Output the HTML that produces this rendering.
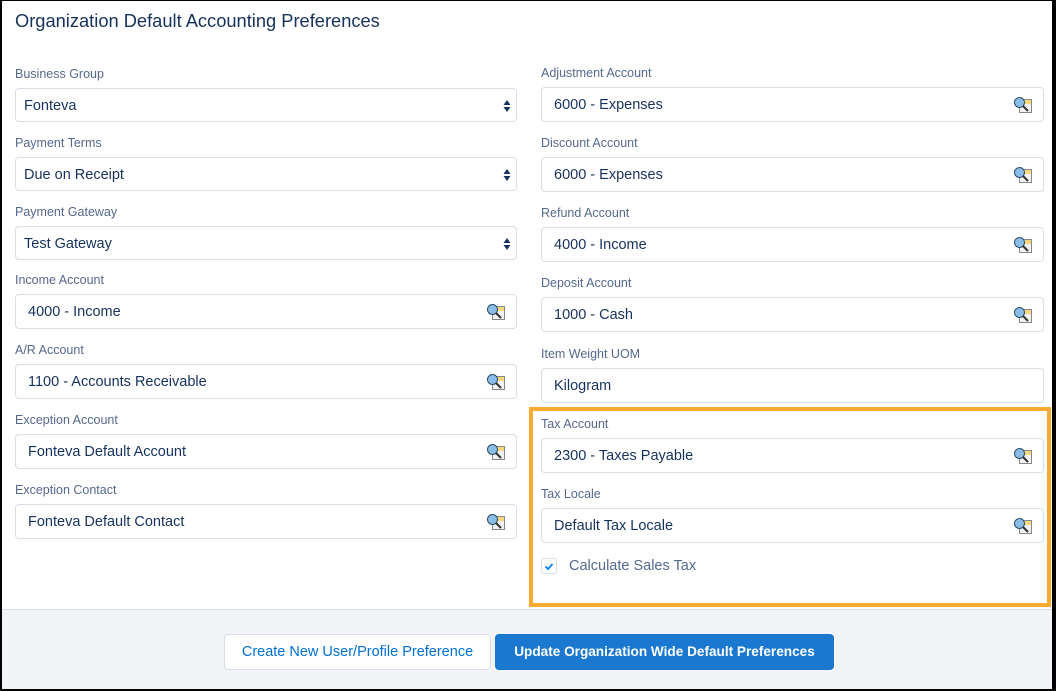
<!DOCTYPE html>
<html><head><meta charset="utf-8"><style>
*{box-sizing:border-box;margin:0;padding:0}
body{width:1056px;height:691px;background:#000;font-family:"Liberation Sans",sans-serif;position:relative;overflow:hidden}
.page{position:absolute;left:2px;top:1px;width:1050px;height:688px;background:#fff}
.foot{position:absolute;left:2px;top:609px;width:1050px;height:80px;background:#f3f4f7;border-top:1px solid #d8dde6}
h1{position:absolute;left:15px;top:10px;font-size:18.3px;font-weight:normal;color:#16325c}
.lbl{position:absolute;font-size:12.5px;color:#54698d}
.inp{position:absolute;height:35px;border:1px solid #d8dde6;border-radius:4px;font-size:14.5px;color:#16325c;padding:0 12px;line-height:35px;background:#fff}
.sel{padding-left:8px}
.arr{position:absolute;right:5px;top:10px;width:8px;height:14px}
.lk{position:absolute;right:10px;top:8px}
.box{position:absolute;left:529px;top:407px;width:522px;height:200px;border:4px solid #f9ab2f}
.btn{position:absolute;top:634px;height:36px;border-radius:4px;font-size:14.5px;line-height:34px;text-align:center}
</style></head><body>
<div class="page"></div>
<div class="foot"></div>
<h1>Organization Default Accounting Preferences</h1>

<div class="lbl" style="left:15px;top:67px">Business Group</div>
<div class="inp sel" style="left:15px;top:88px;width:502px;height:34px">Fonteva<svg class="arr" viewBox="0 0 8 14"><path d="M4 1L7.5 6H.5zM4 13L.5 8h7z" fill="#16325c"/></svg></div>
<div class="lbl" style="left:15px;top:136px">Payment Terms</div>
<div class="inp sel" style="left:15px;top:157px;width:502px;height:34px">Due on Receipt<svg class="arr" viewBox="0 0 8 14"><path d="M4 1L7.5 6H.5zM4 13L.5 8h7z" fill="#16325c"/></svg></div>
<div class="lbl" style="left:15px;top:205px">Payment Gateway</div>
<div class="inp sel" style="left:15px;top:226px;width:502px;height:34px">Test Gateway<svg class="arr" viewBox="0 0 8 14"><path d="M4 1L7.5 6H.5zM4 13L.5 8h7z" fill="#16325c"/></svg></div>

<div class="lbl" style="left:15px;top:273px">Income Account</div>
<div class="inp" style="left:15px;top:294px;width:502px">4000 - Income<svg class="lk" width="20" height="18" viewBox="0 0 20 18"><rect x="6.5" y="3.5" width="12" height="13" fill="#f2f2f2" stroke="#888"/><rect x="12" y="4" width="6" height="4" fill="#f7d87a"/><circle cx="6.5" cy="6.5" r="5" fill="#8cbde6" stroke="#2d4a66"/><path d="M10 10l5 5" stroke="#333" stroke-width="2"/></svg></div>
<div class="lbl" style="left:15px;top:343px">A/R Account</div>
<div class="inp" style="left:15px;top:364px;width:502px">1100 - Accounts Receivable<svg class="lk" width="20" height="18" viewBox="0 0 20 18"><rect x="6.5" y="3.5" width="12" height="13" fill="#f2f2f2" stroke="#888"/><rect x="12" y="4" width="6" height="4" fill="#f7d87a"/><circle cx="6.5" cy="6.5" r="5" fill="#8cbde6" stroke="#2d4a66"/><path d="M10 10l5 5" stroke="#333" stroke-width="2"/></svg></div>
<div class="lbl" style="left:15px;top:413px">Exception Account</div>
<div class="inp" style="left:15px;top:434px;width:502px">Fonteva Default Account<svg class="lk" width="20" height="18" viewBox="0 0 20 18"><rect x="6.5" y="3.5" width="12" height="13" fill="#f2f2f2" stroke="#888"/><rect x="12" y="4" width="6" height="4" fill="#f7d87a"/><circle cx="6.5" cy="6.5" r="5" fill="#8cbde6" stroke="#2d4a66"/><path d="M10 10l5 5" stroke="#333" stroke-width="2"/></svg></div>
<div class="lbl" style="left:15px;top:483px">Exception Contact</div>
<div class="inp" style="left:15px;top:504px;width:502px">Fonteva Default Contact<svg class="lk" width="20" height="18" viewBox="0 0 20 18"><rect x="6.5" y="3.5" width="12" height="13" fill="#f2f2f2" stroke="#888"/><rect x="12" y="4" width="6" height="4" fill="#f7d87a"/><circle cx="6.5" cy="6.5" r="5" fill="#8cbde6" stroke="#2d4a66"/><path d="M10 10l5 5" stroke="#333" stroke-width="2"/></svg></div>

<div class="lbl" style="left:541px;top:66px">Adjustment Account</div>
<div class="inp" style="left:541px;top:87px;width:503px">6000 - Expenses<svg class="lk" width="20" height="18" viewBox="0 0 20 18"><rect x="6.5" y="3.5" width="12" height="13" fill="#f2f2f2" stroke="#888"/><rect x="12" y="4" width="6" height="4" fill="#f7d87a"/><circle cx="6.5" cy="6.5" r="5" fill="#8cbde6" stroke="#2d4a66"/><path d="M10 10l5 5" stroke="#333" stroke-width="2"/></svg></div>
<div class="lbl" style="left:541px;top:136px">Discount Account</div>
<div class="inp" style="left:541px;top:157px;width:503px">6000 - Expenses<svg class="lk" width="20" height="18" viewBox="0 0 20 18"><rect x="6.5" y="3.5" width="12" height="13" fill="#f2f2f2" stroke="#888"/><rect x="12" y="4" width="6" height="4" fill="#f7d87a"/><circle cx="6.5" cy="6.5" r="5" fill="#8cbde6" stroke="#2d4a66"/><path d="M10 10l5 5" stroke="#333" stroke-width="2"/></svg></div>
<div class="lbl" style="left:541px;top:206px">Refund Account</div>
<div class="inp" style="left:541px;top:227px;width:503px">4000 - Income<svg class="lk" width="20" height="18" viewBox="0 0 20 18"><rect x="6.5" y="3.5" width="12" height="13" fill="#f2f2f2" stroke="#888"/><rect x="12" y="4" width="6" height="4" fill="#f7d87a"/><circle cx="6.5" cy="6.5" r="5" fill="#8cbde6" stroke="#2d4a66"/><path d="M10 10l5 5" stroke="#333" stroke-width="2"/></svg></div>
<div class="lbl" style="left:541px;top:276px">Deposit Account</div>
<div class="inp" style="left:541px;top:297px;width:503px">1000 - Cash<svg class="lk" width="20" height="18" viewBox="0 0 20 18"><rect x="6.5" y="3.5" width="12" height="13" fill="#f2f2f2" stroke="#888"/><rect x="12" y="4" width="6" height="4" fill="#f7d87a"/><circle cx="6.5" cy="6.5" r="5" fill="#8cbde6" stroke="#2d4a66"/><path d="M10 10l5 5" stroke="#333" stroke-width="2"/></svg></div>
<div class="lbl" style="left:541px;top:347px">Item Weight UOM</div>
<div class="inp" style="left:541px;top:368px;width:503px">Kilogram</div>

<div class="box"></div>
<div class="lbl" style="left:541px;top:417px">Tax Account</div>
<div class="inp" style="left:541px;top:438px;width:503px">2300 - Taxes Payable<svg class="lk" width="20" height="18" viewBox="0 0 20 18"><rect x="6.5" y="3.5" width="12" height="13" fill="#f2f2f2" stroke="#888"/><rect x="12" y="4" width="6" height="4" fill="#f7d87a"/><circle cx="6.5" cy="6.5" r="5" fill="#8cbde6" stroke="#2d4a66"/><path d="M10 10l5 5" stroke="#333" stroke-width="2"/></svg></div>
<div class="lbl" style="left:541px;top:487px">Tax Locale</div>
<div class="inp" style="left:541px;top:508px;width:503px">Default Tax Locale<svg class="lk" width="20" height="18" viewBox="0 0 20 18"><rect x="6.5" y="3.5" width="12" height="13" fill="#f2f2f2" stroke="#888"/><rect x="12" y="4" width="6" height="4" fill="#f7d87a"/><circle cx="6.5" cy="6.5" r="5" fill="#8cbde6" stroke="#2d4a66"/><path d="M10 10l5 5" stroke="#333" stroke-width="2"/></svg></div>
<div style="position:absolute;left:541px;top:558px;width:16px;height:16px;border:1px solid #d8dde6;border-radius:3px;background:#fff"><svg width="14" height="14" viewBox="0 0 14 14"><path d="M3.5 7.5l2.5 2.5 4.5-5" stroke="#1589ee" stroke-width="2" fill="none"/></svg></div>
<div style="position:absolute;left:569px;top:558px;font-size:14.5px;color:#54698d">Calculate Sales Tax</div>

<div class="btn" style="left:224px;width:267px;border:1px solid #d8dde6;background:#fff;color:#0070d2">Create New User/Profile Preference</div>
<div class="btn" style="left:495px;width:339px;background:#1b78d0;color:#fff;border:1px solid #1b78d0;font-weight:bold;font-size:13.6px">Update Organization Wide Default Preferences</div>
</body></html>
